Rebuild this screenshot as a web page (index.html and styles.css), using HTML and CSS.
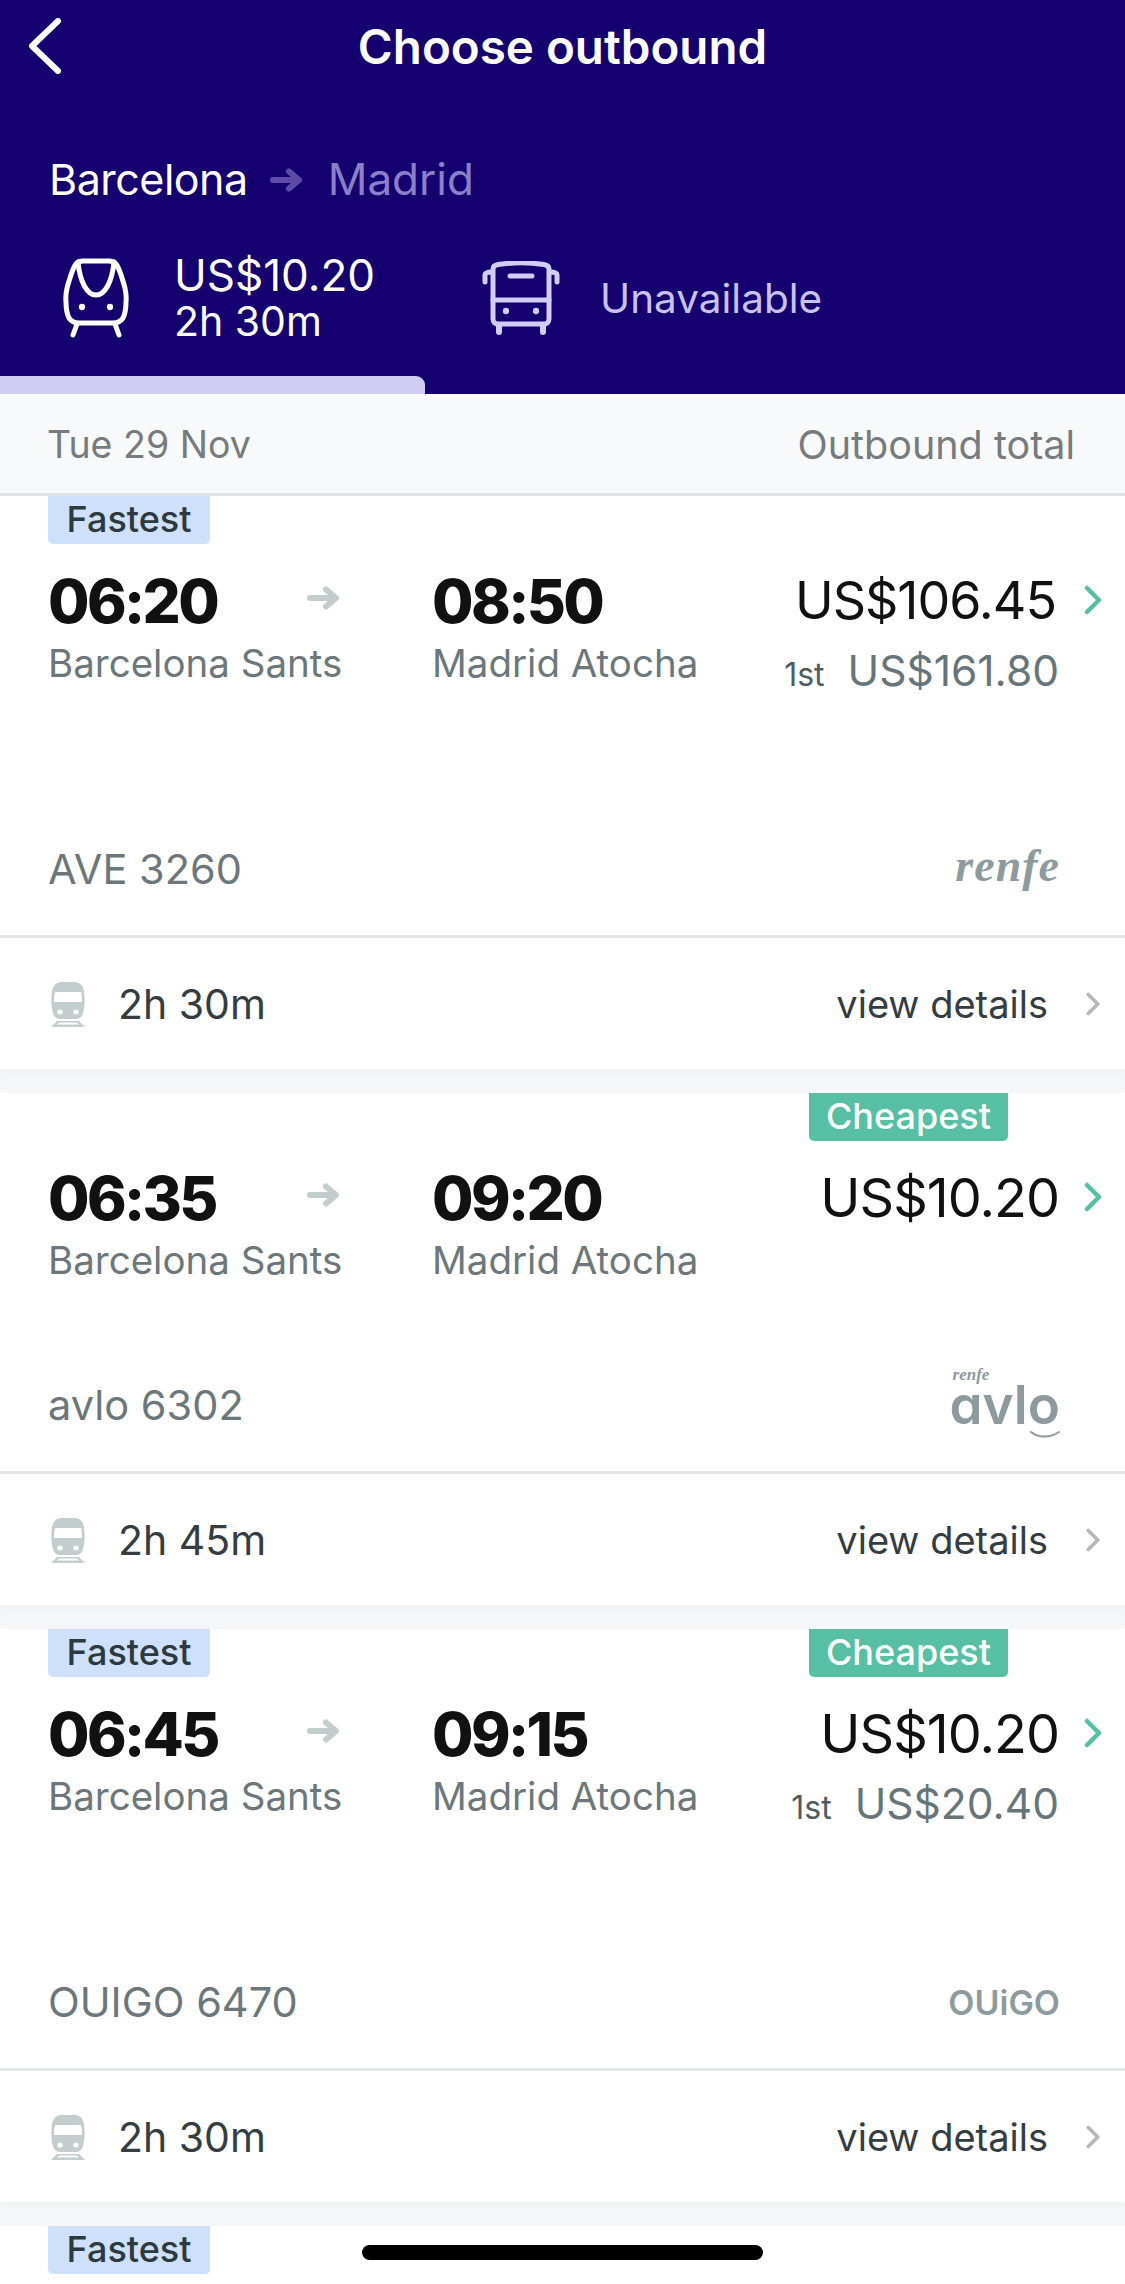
FILE: index.html
```html
<!DOCTYPE html>
<html lang="en">
<head>
    <meta charset="UTF-8">
    <meta name="viewport" content="width=device-width, initial-scale=1.0">
    <title>Choose outbound</title>
    <link rel="stylesheet" href="styles.css">
</head>
<body>
    <svg class="defs" width="0" height="0">
        <symbol id="arrow" viewBox="0 0 34 24">
            <path d="M3 12H28M19 3.5L29 12L19 20.5" fill="none" stroke="currentColor" stroke-width="6" stroke-linecap="round" stroke-linejoin="round"/>
        </symbol>
        <symbol id="chevron" viewBox="0 0 20 30">
            <path d="M4 3L16 15L4 27" fill="none" stroke="currentColor" stroke-width="4.5" stroke-linecap="round" stroke-linejoin="round"/>
        </symbol>
        <symbol id="trainSmall" viewBox="0 0 36 46">
            <path d="M11 1H25C30 1 33 5 34 10C35 17 35 26 33 32C32 36 29 38 26 38H10C7 38 4 36 3 32C1 26 1 17 2 10C3 5 6 1 11 1Z" fill="currentColor"/>
            <path d="M5 11H31C32 15 32 18 32 21H4C4 18 4 15 5 11Z" fill="#fff"/>
            <circle cx="10" cy="31" r="2.6" fill="#fff"/>
            <circle cx="26" cy="31" r="2.6" fill="#fff"/>
            <path d="M7 40H29L35 46H1Z" fill="currentColor"/>
            <path d="M9 41.5H27L29 43.5H7Z" fill="#fff"/>
        </symbol>
    </svg>

    <header class="top">
        <div class="titlebar">
            <svg class="back" width="34" height="56" viewBox="0 0 34 56">
                <path d="M30 3L4 28L30 53" fill="none" stroke="#fff" stroke-width="6" stroke-linecap="round" stroke-linejoin="round"/>
            </svg>
            <h1>Choose outbound</h1>
        </div>
        <div class="route">
            <span>Barcelona</span>
            <svg class="route-arrow" width="34" height="24"><use href="#arrow"/></svg>
            <span class="route-to">Madrid</span>
        </div>
        <div class="modes">
            <div class="mode mode-train">
                <svg width="66" height="80" viewBox="0 0 66 80" fill="none" stroke="#fff" stroke-width="5" stroke-linecap="round" stroke-linejoin="round">
                    <path d="M20 3H46C52 3 54 6 57 14C61 26 64 34 63 44C63 50 62 56 60 60C58 63 55 65 50 65H16C11 65 8 63 6 60C4 56 3 50 3 44C2 34 5 26 9 14C12 6 14 3 20 3Z"/>
                    <path d="M15 4C17 24 24 37 33 37C42 37 49 24 51 4"/>
                    <path d="M14 66L10 77M52 66L56 77"/>
                    <circle cx="19" cy="49" r="2.4" fill="#fff" stroke-width="1.5"/>
                    <circle cx="47" cy="49" r="2.4" fill="#fff" stroke-width="1.5"/>
                </svg>
                <div class="mode-text">
                    <div>US$10.20</div>
                    <div class="mode-time">2h 30m</div>
                </div>
            </div>
            <div class="mode mode-bus">
                <svg width="78" height="74" viewBox="0 0 78 74" fill="none" stroke="#d2cdf2" stroke-width="5" stroke-linecap="round" stroke-linejoin="round">
                    <path d="M11 8C11 5 13 4 16 3.500C30 1.500 48 1.500 62 3.500C65 4 67 5 67 8V58C67 61 65 63 62 63H16C13 63 11 61 11 58Z"/>
                    <path d="M11 39H67M28 15H50"/>
                    <path d="M3 21V14C3 12 5 11 10 11M75 21V14C75 12 73 11 68 11"/>
                    <path d="M17 64V71M61 64V71" stroke-width="6"/>
                    <circle cx="24" cy="50" r="2.4" fill="#d2cdf2" stroke-width="1.5"/>
                    <circle cx="54" cy="50" r="2.4" fill="#d2cdf2" stroke-width="1.5"/>
                </svg>
                <span class="mode-off">Unavailable</span>
            </div>
        </div>
        <div class="progress"></div>
    </header>

    <div class="subhead">
        <span>Tue 29 Nov</span>
        <span class="subhead-total">Outbound total</span>
    </div>

    <section class="card">
        <span class="tag tag-fast">Fastest</span>
        <div class="card-main has-first">
            <div class="leg">
                <div class="time">06:20</div>
                <div class="station">Barcelona Sants</div>
            </div>
            <svg class="leg-arrow" width="34" height="24"><use href="#arrow"/></svg>
            <div class="leg leg-end">
                <div class="time">08:50</div>
                <div class="station">Madrid Atocha</div>
            </div>
            <div class="fare">
                <div class="price">US$106.45</div>
                <div class="first"><small>1st</small>US$161.80</div>
            </div>
            <svg class="go" width="20" height="30"><use href="#chevron"/></svg>
        </div>
        <div class="carrier">
            <span>AVE 3260</span>
            <span class="logo-renfe">renfe</span>
        </div>
        <div class="details">
            <svg class="train-small" width="36" height="46"><use href="#trainSmall"/></svg>
            <span class="duration">2h 30m</span>
            <span class="view">view details</span>
            <svg class="more" width="16" height="24"><use href="#chevron"/></svg>
        </div>
    </section>

    <section class="card">
        <span class="tag tag-cheap">Cheapest</span>
        <div class="card-main">
            <div class="leg">
                <div class="time">06:35</div>
                <div class="station">Barcelona Sants</div>
            </div>
            <svg class="leg-arrow" width="34" height="24"><use href="#arrow"/></svg>
            <div class="leg leg-end">
                <div class="time">09:20</div>
                <div class="station">Madrid Atocha</div>
            </div>
            <div class="fare">
                <div class="price price-short">US$10.20</div>
            </div>
            <svg class="go" width="20" height="30"><use href="#chevron"/></svg>
        </div>
        <div class="carrier">
            <span>avlo 6302</span>
            <span class="logo-avlo">
                <small>renfe</small>avlo
                <svg class="avlo-smile" width="30" height="10" viewBox="0 0 30 10">
                    <path d="M1 2C8 8 20 8 29 2" fill="none" stroke="#8d9a9e" stroke-width="2" stroke-linecap="round"/>
                </svg>
            </span>
        </div>
        <div class="details">
            <svg class="train-small" width="36" height="46"><use href="#trainSmall"/></svg>
            <span class="duration">2h 45m</span>
            <span class="view">view details</span>
            <svg class="more" width="16" height="24"><use href="#chevron"/></svg>
        </div>
    </section>

    <section class="card">
        <span class="tag tag-fast">Fastest</span>
        <span class="tag tag-cheap">Cheapest</span>
        <div class="card-main has-first">
            <div class="leg">
                <div class="time">06:45</div>
                <div class="station">Barcelona Sants</div>
            </div>
            <svg class="leg-arrow" width="34" height="24"><use href="#arrow"/></svg>
            <div class="leg leg-end">
                <div class="time">09:15</div>
                <div class="station">Madrid Atocha</div>
            </div>
            <div class="fare">
                <div class="price price-short">US$10.20</div>
                <div class="first"><small>1st</small>US$20.40</div>
            </div>
            <svg class="go" width="20" height="30"><use href="#chevron"/></svg>
        </div>
        <div class="carrier">
            <span>OUIGO 6470</span>
            <span class="logo-ouigo">OUiGO</span>
        </div>
        <div class="details">
            <svg class="train-small" width="36" height="46"><use href="#trainSmall"/></svg>
            <span class="duration">2h 30m</span>
            <span class="view">view details</span>
            <svg class="more" width="16" height="24"><use href="#chevron"/></svg>
        </div>
    </section>

    <section class="card card-cut">
        <span class="tag tag-fast">Fastest</span>
    </section>

    <div class="home-bar"></div>
</body>
</html>
```

FILE: styles.css
```css
html, body {
    margin: 0;
    height: 2284px;
    overflow: hidden;
}
body {
    position: relative;
    font-family: Inter, "Liberation Sans", sans-serif;
    background: #f4f6f7;
    color: #111;
}
.defs {
    position: absolute;
}

/* Header */
.top {
    height: 394px;
    background: #150070;
    color: #fff;
    display: flex;
    flex-direction: column;
    position: relative;
}
.titlebar {
    height: 92px;
    position: relative;
    display: flex;
    justify-content: center;
    align-items: center;
}
.titlebar h1 {
    margin: 0;
    font-size: 47.500px;
    font-weight: 600;
}
.back {
    position: absolute;
    left: 28px;
    top: 18px;
}
.route {
    display: flex;
    align-items: center;
    margin-top: 61px;
    padding-left: 49px;
    font-size: 43px;
    line-height: 52px;
    letter-spacing: -0.5px;
}
.route-arrow {
    margin: 2px 24px 0 22px;
    color: #5c4ba8;
}
.route-to {
    color: #8b80c8;
    font-size: 44px;
    letter-spacing: 0;
}
.modes {
    display: flex;
    margin-top: 47px;
}
.mode {
    display: flex;
    align-items: center;
}
.mode-train {
    width: 482px;
    padding-left: 63px;
    box-sizing: border-box;
    gap: 45px;
    font-size: 44px;
    line-height: 46px;
}
.mode-time {
    font-size: 41px;
}
.mode-bus {
    gap: 40px;
}
.mode-off {
    color: #c8c2ec;
    font-size: 40.500px;
}
.progress {
    position: absolute;
    left: 0;
    bottom: 0;
    width: 425px;
    height: 18px;
    background: #d2cdf2;
    border-radius: 0 9px 0 0;
}

/* Date row */
.subhead {
    height: 97px;
    background: #f8f9fb;
    border-bottom: 3px solid #e2e3e4;
    display: flex;
    justify-content: space-between;
    align-items: center;
    padding: 2px 50px 0 47px;
    font-size: 37.500px;
    color: #767b7e;
}
.subhead-total {
    font-size: 39.500px;
}

/* Cards */
.card {
    background: #fff;
    position: relative;
    margin-bottom: 24px;
    box-shadow: 0 3px 8px rgba(0,0,0,0.025);
}
.card-cut {
    height: 60px;
    margin: 0;
}
.tag {
    position: absolute;
    top: 0;
    height: 48px;
    line-height: 46px;
    font-size: 36px;
    font-weight: 500;
    text-align: center;
    border-radius: 0 0 5px 5px;
}
.tag-fast {
    left: 48px;
    width: 162px;
    background: #cfe0fa;
    color: #2c3a40;
}
.tag-cheap {
    left: 809px;
    width: 199px;
    background: #56bfa4;
    color: #fff;
}
.card-main {
    height: 246px;
    box-sizing: border-box;
    padding: 70px 22px 0 48px;
    display: flex;
    align-items: flex-start;
}
.card-main.has-first {
    height: 307px;
}
.leg {
    width: 259px;
}
.leg-end {
    width: auto;
    margin-left: 91px;
}
.leg-arrow {
    color: #c3cdcd;
    margin-top: 20px;
}
.time {
    font-size: 60px;
    font-weight: 800;
    line-height: 70px;
    letter-spacing: -2.600px;
}
.station {
    margin-top: 4px;
    font-size: 38.500px;
    line-height: 46px;
    color: #6b777b;
    white-space: nowrap;
}
.fare {
    margin-left: auto;
    text-align: right;
}
.price {
    font-size: 52px;
    line-height: 70px;
    letter-spacing: -1px;
    margin-right: 3px;
}
.price-short {
    font-size: 54px;
    margin-right: 0;
}
.first {
    font-size: 42.500px;
    line-height: 54px;
    margin-top: 8px;
    color: #66757a;
}
.first small {
    font-size: 32px;
    color: #4f5c60;
    margin-right: 23px;
}
.go {
    margin: 19px 0 0 24px;
    color: #56bfa4;
}
.carrier {
    height: 132px;
    box-sizing: border-box;
    display: flex;
    justify-content: space-between;
    align-items: center;
    padding: 0 65px 0 48px;
    font-size: 41.500px;
    color: #6b777b;
}
.logo-renfe {
    font-family: "Liberation Serif", serif;
    font-size: 46px;
    font-weight: 700;
    font-style: italic;
    letter-spacing: 1px;
    color: #8d9a9e;
    margin-bottom: 8px;
}
.logo-avlo {
    position: relative;
    font-size: 53px;
    font-weight: 600;
    line-height: 54px;
    font-feature-settings: "cv11";
    color: #8d9a9e;
}
.logo-avlo small {
    position: absolute;
    left: 3px;
    top: -12px;
    font-family: "Liberation Serif", serif;
    font-size: 17px;
    line-height: 18px;
    font-weight: 700;
    font-style: italic;
}
.avlo-smile {
    position: absolute;
    right: 0;
    bottom: -8px;
}
.logo-ouigo {
    font-size: 34px;
    font-weight: 600;
    color: #8d9a9e;
}
.details {
    height: 134px;
    box-sizing: border-box;
    border-top: 3px solid #e3e5e5;
    display: flex;
    align-items: center;
    padding: 0 24px 0 50px;
    font-size: 41px;
    color: #333d42;
}
.train-small {
    color: #c3cdcd;
}
.duration {
    margin-left: 32px;
}
.view {
    margin-left: auto;
    font-size: 38px;
}
.more {
    margin-left: 37px;
    color: #b6b8b8;
}

.home-bar {
    position: absolute;
    left: 362px;
    top: 2245px;
    width: 401px;
    height: 15px;
    background: #000;
    border-radius: 8px;
}
```
